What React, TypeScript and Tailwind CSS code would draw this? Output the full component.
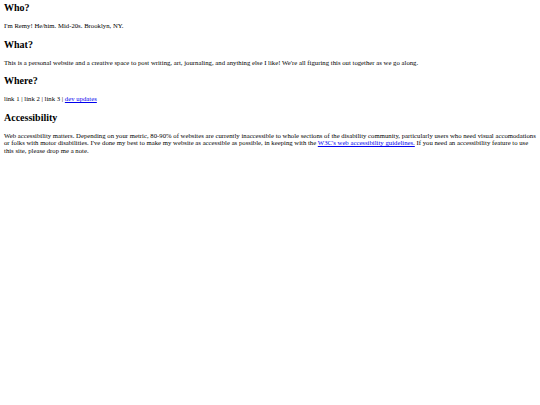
export default function App() {
  return (
    <div className="min-h-[405px] bg-white px-1 pt-[2px] text-black font-[family-name:'Liberation_Serif',serif]">
      <h2 className="mb-[8px] text-[10px] font-bold leading-[12px]">Who?</h2>
      <p className="text-[6.7px] leading-[7.7px] tracking-[0.02px]">I'm Remy! He/him. Mid-20s. Brooklyn, NY.</p>
      <h2 className="mt-[8.8px] mb-[8px] text-[10px] font-bold leading-[12px]">What?</h2>
      <p className="text-[6.7px] leading-[7.7px] tracking-[0.02px]">
        This is a personal website and a creative space to post writing, art, journaling, and anything else I like! We're all figuring this out together as we go along.
      </p>
      <h2 className="mt-[8.8px] mb-[8px] text-[10px] font-bold leading-[12px]">Where?</h2>
      <p className="text-[6.7px] leading-[7.7px] tracking-[0.02px]">
        link 1 | link 2 | link 3 |{" "}
        <a href="#" className="text-[#0000ee] underline">dev updates</a>
      </p>
      <h2 className="mt-[8.8px] mb-[8px] text-[10px] font-bold leading-[12px]">Accessibility</h2>
      <p className="text-[6.7px] leading-[7.7px] tracking-[0.02px]">
        Web accessibility matters. Depending on your metric, 80-90% of websites are currently inaccessible to whole sections of the disability community, particularly users who need visual accomodations or folks with motor disabilities. I've done my best to make my website as accessible as possible, in keeping with the{" "}
        <a href="#" className="text-[#0000ee] underline">W3C's web accessibility guidelines.</a>{" "}
        If you need an accessibility feature to use this site, please drop me a note.
      </p>
    </div>
  );
}
